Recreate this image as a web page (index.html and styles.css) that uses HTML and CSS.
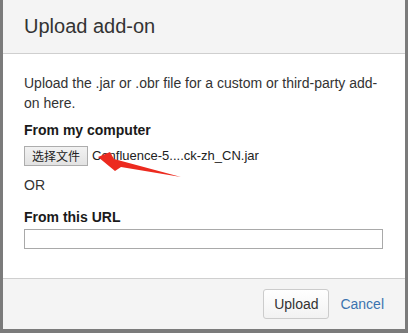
FILE: index.html
```html
<!DOCTYPE html>
<html lang="en">
<head>
    <meta charset="UTF-8">
    <meta name="viewport" content="width=device-width, initial-scale=1.0">
    <title>Upload add-on</title>
    <link rel="stylesheet" href="styles.css">
</head>
<body>
    <div class="dialog">
        <div class="dialog-header">
            <h2>Upload add-on</h2>
        </div>
        <div class="dialog-body">
            <p class="intro">Upload the .jar or .obr file for a custom or third-party add-on here.</p>
            <label class="field-label">From my computer</label>
            <div class="file-row">
                <button class="file-button">选择文件</button>
                <span class="file-name">Confluence-5....ck-zh_CN.jar</span>
                <svg class="arrow" width="100" height="40" viewBox="0 0 100 40">
                    <polygon points="0,13 12,8 16,15 83,33 23,23 17,27" fill="#ec2a1f"/>
                </svg>
            </div>
            <p class="or">OR</p>
            <label class="field-label">From this URL</label>
            <input type="text" class="url-input">
        </div>
        <div class="dialog-footer">
            <button class="upload-button">Upload</button>
            <a href="#" class="cancel">Cancel</a>
        </div>
    </div>
</body>
</html>
```

FILE: styles.css
```css
body {
    margin: 0;
    background-color: #7b7b7b;
    font-family: "Liberation Sans", Arial, sans-serif;
    color: #333;
}
.dialog {
    margin: 0 3px 3px 3px;
    background: white;
}
.dialog-header {
    height: 53px;
    background-color: #f4f4f4;
    border-bottom: 1px solid #cfcfcf;
    padding: 0 21px;
    display: flex;
    align-items: center;
}
.dialog-header h2 {
    margin: 0;
    font-size: 20px;
    font-weight: normal;
    color: #333;
}
.dialog-body {
    padding: 19px 21px 29px 21px;
    font-size: 14px;
    line-height: 20px;
}
.intro {
    margin: 0 0 7px 0;
}
.field-label {
    display: block;
    font-weight: bold;
    color: #1a1a1a;
}
.file-row {
    position: relative;
    display: flex;
    align-items: center;
    margin-top: 6px;
    height: 20px;
}
.file-button {
    height: 20px;
    width: 64px;
    padding: 0;
    border: 1px solid #adadad;
    background: linear-gradient(#f2f2f2, #e2e2e2);
    font-family: "Noto Sans CJK SC", sans-serif;
    font-size: 12px;
    color: #222;
    line-height: 18px;
}
.file-name {
    margin-left: 4px;
    font-size: 13px;
    color: #222;
}
.arrow {
    position: absolute;
    left: 74px;
    top: -2px;
}
.or {
    margin: 9px 0 12px 0;
}
.url-input {
    display: block;
    margin-top: 2px;
    width: 359px;
    height: 20px;
    box-sizing: border-box;
    border: 1px solid #a9a9a9;
    padding: 0 4px;
}
.dialog-footer {
    height: 50px;
    background-color: #f4f4f4;
    border-top: 1px solid #cfcfcf;
    display: flex;
    align-items: center;
    justify-content: flex-end;
    padding: 0 21px;
}
.upload-button {
    width: 66px;
    height: 30px;
    border: 1px solid #ccc;
    border-radius: 3px;
    background: linear-gradient(#fff, #f2f2f2);
    font-family: "Liberation Sans", Arial, sans-serif;
    font-size: 14px;
    color: #333;
}
.cancel {
    margin-left: 11px;
    font-size: 14px;
    color: #3b73af;
    text-decoration: none;
}
```
